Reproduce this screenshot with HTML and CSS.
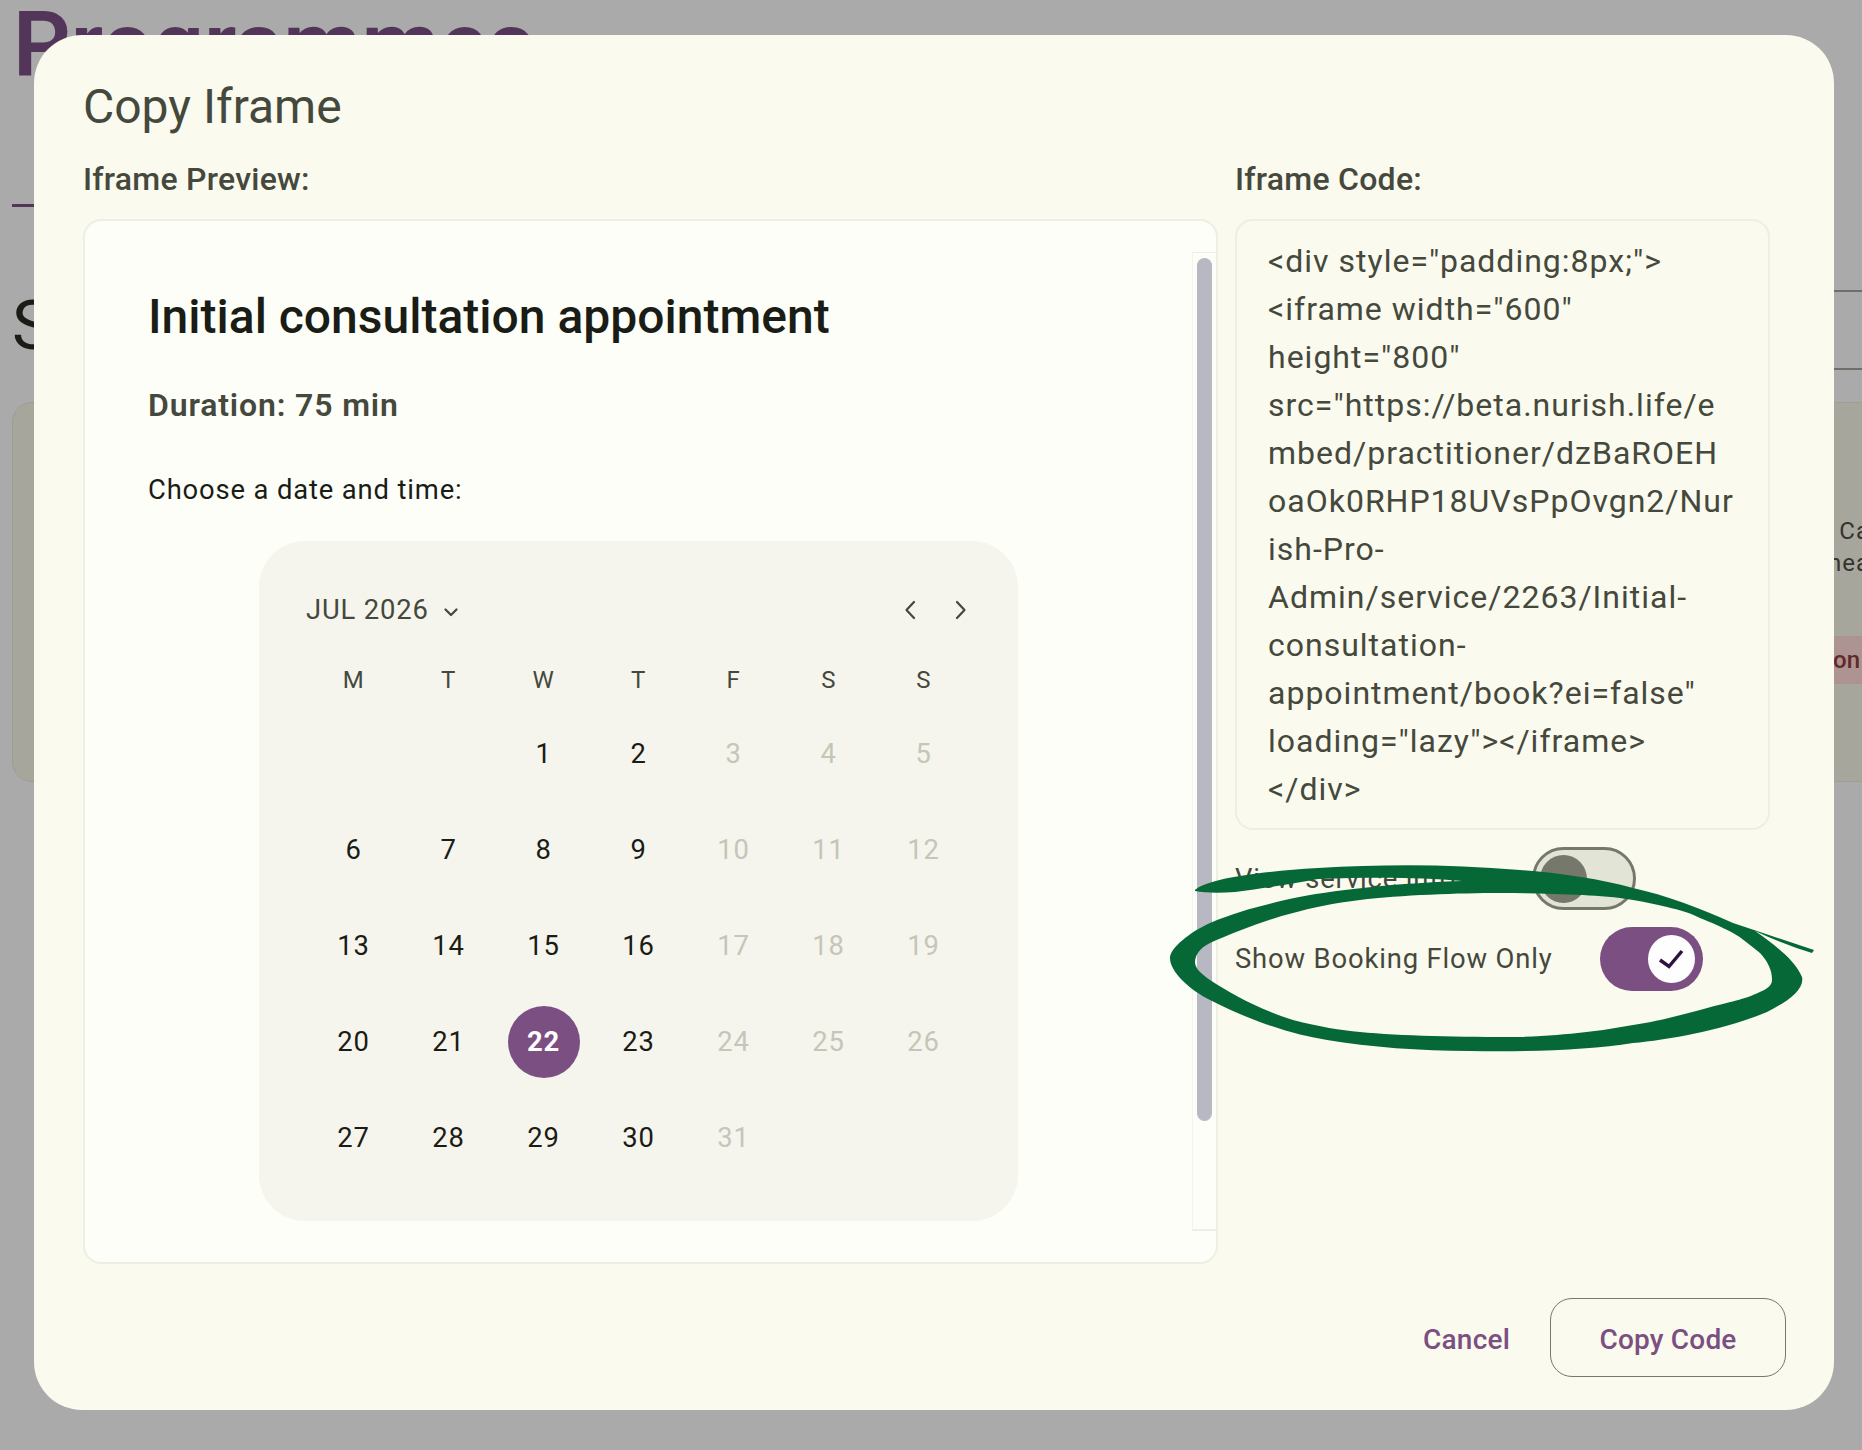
FILE: index.html
```html
<!DOCTYPE html>
<html lang="en">
  <head>
    <meta charset="UTF-8" />
    <meta name="viewport" content="width=device-width, initial-scale=1.0" />
    <title>Copy Iframe</title>
    <link rel="stylesheet" href="styles.css">
  </head>
  <body>
    <!-- page behind the dialog, already dimmed by the scrim -->
    <div class="page">
      <h1 class="page-title">Programmes</h1>
      <div class="tab-line"></div>
      <div class="rules">
        <div class="rule"></div>
        <div class="rule rule-second"></div>
      </div>
      <h2 class="section-title">Services</h2>
      <div class="cards">
        <div class="card"></div>
        <div class="card card-right">
          <p class="card-text">Ca<br>hea</p>
          <span class="card-tag">on</span>
        </div>
      </div>
    </div>

    <div class="modal">
      <h2 class="modal-title">Copy Iframe</h2>
      <div class="modal-body">
        <div class="preview-col">
          <div class="col-label">Iframe Preview:</div>
          <div class="preview">
            <div class="preview-inner">
              <h3 class="service-name">Initial consultation appointment</h3>
              <p class="duration">Duration: 75 min</p>
              <p class="choose">Choose a date and time:</p>
              <div class="calendar">
                <div class="cal-header">
                  <div class="cal-month">
                    JUL 2026
                    <svg class="cal-caret" width="14" height="9" viewBox="0 0 14 9"><path d="M1.5 1.5 7 7l5.5-5.5" /></svg>
                  </div>
                  <div class="cal-nav">
                    <svg width="12" height="20" viewBox="0 0 12 20"><path d="M10 2 2.5 10 10 18" /></svg>
                    <svg width="12" height="20" viewBox="0 0 12 20"><path d="M2 2l7.500 8L2 18" /></svg>
                  </div>
                </div>
                <div class="cal-weekdays">
                  <div>M</div><div>T</div><div>W</div><div>T</div><div>F</div><div>S</div><div>S</div>
                </div>
                <div class="cal-days">
                  <div></div><div></div>
                  <div class="day">1</div><div class="day">2</div><div class="day off">3</div><div class="day off">4</div><div class="day off">5</div>
                  <div class="day">6</div><div class="day">7</div><div class="day">8</div><div class="day">9</div><div class="day off">10</div><div class="day off">11</div><div class="day off">12</div>
                  <div class="day">13</div><div class="day">14</div><div class="day">15</div><div class="day">16</div><div class="day off">17</div><div class="day off">18</div><div class="day off">19</div>
                  <div class="day">20</div><div class="day">21</div><div class="day"><span class="selected">22</span></div><div class="day">23</div><div class="day off">24</div><div class="day off">25</div><div class="day off">26</div>
                  <div class="day">27</div><div class="day">28</div><div class="day">29</div><div class="day">30</div><div class="day off">31</div>
                </div>
              </div>
            </div>
            <div class="scroll-track"><div class="scroll-thumb"></div></div>
          </div>
        </div>

        <div class="code-col">
          <div class="col-label">Iframe Code:</div>
          <div class="code-box">&lt;div style="padding:8px;"&gt; &lt;iframe width="600" height="800" src="https://beta.nurish.life/embed/practitioner/dzBaROEHoaOk0RHP18UVsPpOvgn2/Nurish-Pro-Admin/service/2263/Initial-consultation-appointment/book?ei=false" loading="lazy"&gt;&lt;/iframe&gt; &lt;/div&gt;</div>
          <div class="toggle-row row-view">
            <span class="toggle-label">View service info</span>
            <span class="toggle"><span class="thumb"></span></span>
          </div>
          <div class="toggle-row row-flow">
            <span class="toggle-label">Show Booking Flow Only</span>
            <span class="toggle on">
              <span class="thumb">
                <svg width="28" height="22" viewBox="0 0 28 22"><path d="M3 12l9 6.500L25 3" /></svg>
              </span>
            </span>
          </div>
        </div>
      </div>
      <div class="modal-footer">
        <button class="btn-text">Cancel</button>
        <button class="btn-outline">Copy Code</button>
      </div>
    </div>

    <!-- hand drawn green ring around the last toggle -->
    <svg class="ink" width="1862" height="1450" viewBox="0 0 1862 1450">
      <path fill-rule="evenodd" d="M1195 890C1205 880 1250 872 1318 868C1385 864 1450 864 1520 870C1560 873 1600 879 1633 888C1665 895 1700 908 1733 923Q1775 937 1814 950L1812 953Q1785 945 1755 931C1775 945 1795 960 1802 977C1805 990 1785 1003 1767 1012C1730 1028 1670 1040 1633 1043C1590 1050 1530 1052 1470 1051C1420 1051 1370 1047 1327 1040C1295 1035 1255 1023 1210 1000C1190 990 1170 972 1170 958C1170 948 1190 932 1210 923C1235 912 1260 906 1285 900C1320 892 1380 884 1462 881C1420 877 1370 877 1318 879C1290 884 1265 888 1235 892C1220 893 1205 893 1195 891Z
      M1500 893C1460 893 1400 895 1360 900C1335 903 1310 908 1293 913C1265 920 1235 932 1210 943C1200 948 1195 955 1195 962C1195 968 1200 973 1210 980C1230 993 1260 1010 1293 1020C1320 1027 1340 1030 1360 1032C1400 1036 1460 1037 1520 1037C1570 1035 1600 1031 1633 1025C1660 1021 1680 1015 1700 1010C1725 1003 1745 999 1753 995C1765 990 1772 987 1772 980C1772 970 1768 962 1760 953C1750 945 1742 938 1733 933C1720 926 1712 923 1700 918C1690 913 1680 910 1667 907C1655 904 1645 902 1633 900C1615 897 1600 896 1583 895C1555 894 1530 893 1500 893Z" />
    </svg>
  </body>
</html>
```

FILE: styles.css
```css
* {
  box-sizing: border-box;
}

html,
body {
  margin: 0;
  height: 1450px;
  overflow: hidden;
}

body {
  position: relative;
  background-color: #aaaaaa;
  font-family: Roboto, "Liberation Sans", sans-serif;
  color: #1a1c16;
}

/* page behind the scrim */
.page {
  height: 1450px;
  padding-left: 12px;
  position: relative;
}

.page-title {
  margin: 0;
  padding: 3px 0 0 1px;
  font-size: 90px;
  line-height: 86px;
  font-weight: 600;
  color: #54355a;
}

.tab-line {
  width: 40px;
  height: 3px;
  margin-top: 115px;
  background-color: #54355a;
}

.section-title {
  margin: 79px 0 0 0;
  font-size: 68px;
  line-height: 80px;
  font-weight: 400;
  color: #1a1c16;
}

.rules {
  position: absolute;
  right: 0;
  top: 290px;
  width: 60px;
}

.rule {
  height: 2px;
  background-color: #6f6f6a;
}

.rule-second {
  margin-top: 76px;
}

.cards {
  display: flex;
  justify-content: space-between;
  margin-top: 36px;
}

.card {
  width: 300px;
  height: 380px;
  border: 1px solid #9e9e94;
  border-radius: 20px;
  background-color: #a6a69c;
}

.card-right {
  padding-top: 112px;
  border-radius: 20px 0 0 20px;
  border-right: none;
  text-align: right;
}

.card-text {
  margin: 0 -8px 0 0;
  font-size: 24px;
  line-height: 32px;
  letter-spacing: 1px;
  white-space: nowrap;
  color: #333330;
}

.card-tag {
  display: block;
  width: 100%;
  height: 48px;
  margin-top: 57px;
  padding-right: 2px;
  background-color: #ad9391;
  color: #5f2a28;
  font-size: 24px;
  font-weight: 500;
  line-height: 48px;
}

/* dialog */
.modal {
  position: absolute;
  left: 34px;
  top: 35px;
  width: 1800px;
  height: 1375px;
  padding: 48px 48px 0 49px;
  border-radius: 48px;
  background-color: #fafaee;
}

.modal-title {
  margin: 0;
  font-size: 48px;
  line-height: 48px;
  font-weight: 400;
  color: #45483c;
}

.modal-body {
  display: flex;
  gap: 17px;
  align-items: flex-start;
  margin-top: 30px;
}

.col-label {
  height: 36px;
  margin-bottom: 22px;
  font-size: 32px;
  line-height: 36px;
  font-weight: 500;
  letter-spacing: 0.25px;
  color: #45483c;
}

.preview-col {
  width: 1135px;
}

.code-col {
  width: 535px;
}

.preview {
  position: relative;
  border: 2px solid #eeefe3;
  border-radius: 18px;
  background-color: #fdfef8;
  padding: 68px 0 41px 63px;
}

.preview-inner {
  width: 1045px;
}

.service-name {
  margin: 0;
  font-size: 48px;
  line-height: 56px;
  font-weight: 500;
  color: #1a1c16;
}

.duration {
  margin: 40px 0 0;
  font-size: 32px;
  line-height: 40px;
  font-weight: 600;
  letter-spacing: 0.85px;
  color: #45483c;
}

.choose {
  margin: 45px 0 31px;
  font-size: 27.400px;
  line-height: 40px;
  letter-spacing: 0.85px;
}

.scroll-track {
  position: absolute;
  top: 31px;
  right: 0;
  width: 24px;
  height: 979px;
  padding: 5px 4px 0 4px;
  border-left: 1px solid #f3f4ea;
  border-top: 1px solid #eeefe3;
  border-bottom: 2px solid #eeefe3;
}

.scroll-thumb {
  width: 15px;
  height: 863px;
  border-radius: 8px;
  background-color: #b8b8c2;
}

/* calendar */
.calendar {
  width: 759px;
  margin-left: 111px;
  padding: 45px 47px 35px;
  border-radius: 46px;
  background-color: #f5f5ed;
}

.cal-header {
  display: flex;
  align-items: center;
  justify-content: space-between;
  height: 48px;
  margin-bottom: 22px;
}

.cal-month {
  display: flex;
  align-items: center;
  gap: 15px;
  font-size: 27.400px;
  letter-spacing: 0.85px;
  color: #45483c;
}

.cal-caret {
  margin-top: 5px;
}

.cal-nav {
  display: flex;
  gap: 39px;
  padding-right: 4px;
}

.calendar svg path {
  fill: none;
  stroke: #45483c;
  stroke-width: 2.200;
  stroke-linecap: round;
  stroke-linejoin: round;
}

.cal-weekdays {
  display: grid;
  grid-template-columns: repeat(7, 95px);
  height: 48px;
  margin-bottom: 2px;
  line-height: 48px;
  text-align: center;
  font-size: 24px;
  letter-spacing: 0.5px;
  color: #45483c;
}

.cal-days {
  display: grid;
  grid-template-columns: repeat(7, 95px);
  grid-auto-rows: 96px;
}

.day {
  display: flex;
  align-items: center;
  justify-content: center;
  font-size: 27.400px;
  letter-spacing: 0.85px;
  color: #1a1c16;
}

.day.off {
  color: #c5c6b8;
}

.selected {
  display: flex;
  align-items: center;
  justify-content: center;
  width: 72px;
  height: 72px;
  border-radius: 50%;
  background-color: #7b4f82;
  color: #ffffff;
  font-weight: 700;
}

/* code column */
.code-box {
  height: 611px;
  margin-bottom: 17px;
  padding: 16px 32px 0 31px;
  border: 2px solid #eeefe3;
  border-radius: 18px;
  font-size: 32px;
  line-height: 48px;
  letter-spacing: 1px;
  color: #45483c;
  overflow-wrap: anywhere;
}

.toggle-row {
  display: flex;
  align-items: center;
  font-size: 27.400px;
  letter-spacing: 0.85px;
  color: #45483c;
}

.row-view {
  gap: 76px;
  margin-bottom: 17px;
}

.row-flow {
  gap: 47px;
}

.toggle {
  display: flex;
  align-items: center;
  width: 104px;
  height: 63px;
  padding-left: 5px;
  border: 3px solid #76786b;
  border-radius: 32px;
  background-color: #e2e5d5;
}

.thumb {
  display: flex;
  align-items: center;
  justify-content: center;
  width: 47px;
  height: 48px;
  border-radius: 50%;
  background-color: #76786b;
}

.toggle.on {
  justify-content: flex-end;
  width: 103px;
  height: 64px;
  padding: 0 8px 0 0;
  border: none;
  background-color: #7b4f82;
}

.toggle.on .thumb {
  background-color: #fefefe;
}

.thumb svg path {
  fill: none;
  stroke: #2f1240;
  stroke-width: 3.500;
}

/* footer */
.modal-footer {
  display: flex;
  align-items: center;
  justify-content: flex-end;
  gap: 40px;
  margin-top: 34px;
}

.btn-text,
.btn-outline {
  padding: 3px 0 0;
  font-family: Roboto, "Liberation Sans", sans-serif;
  font-size: 28px;
  font-weight: 500;
  letter-spacing: 0.2px;
  color: #7b4f82;
  background: none;
  cursor: pointer;
}

.btn-text {
  border: none;
}

.btn-outline {
  width: 236px;
  height: 79px;
  border: 1.500px solid #76786b;
  border-radius: 22px;
}

/* annotation */
.ink {
  position: absolute;
  left: 0;
  top: 0;
  fill: #066836;
  pointer-events: none;
}
```
